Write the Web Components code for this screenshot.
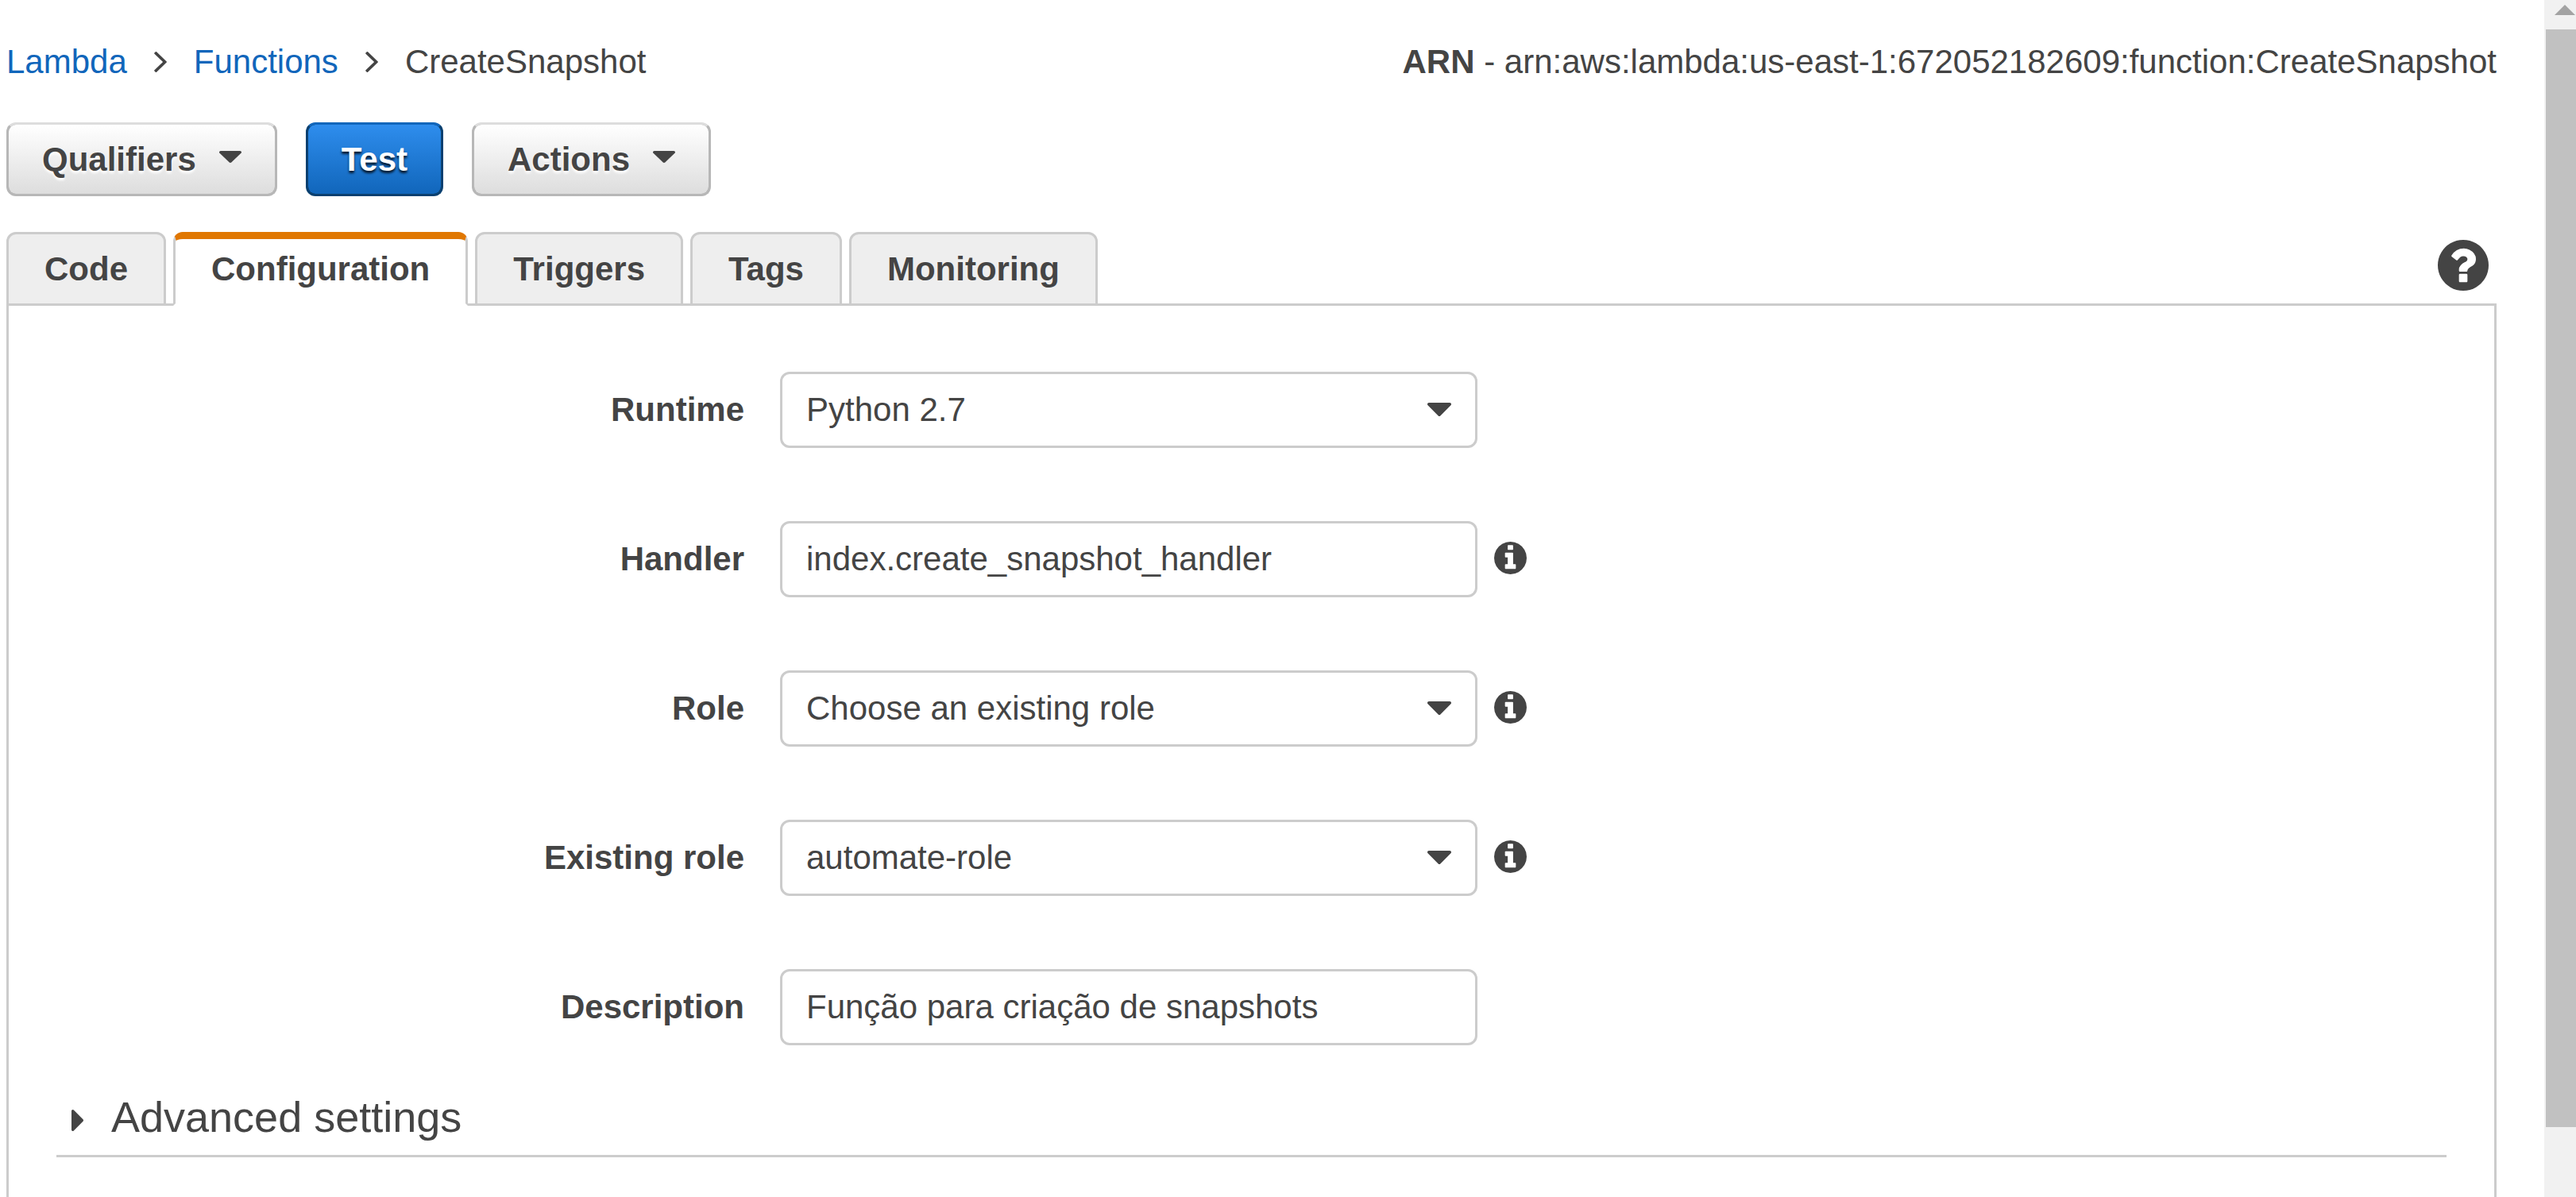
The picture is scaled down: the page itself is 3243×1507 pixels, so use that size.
<!DOCTYPE html>
<html lang="en">
<head>
<meta charset="utf-8">
<title>Lambda - CreateSnapshot</title>
<style>
  html, body { margin: 0; height: 100%; }
  body {
    overflow: hidden;
    background: #fff;
    color: #444;
    font-family: Arial, "Liberation Sans", sans-serif;
    font-size: 42px;
    line-height: 49px;
  }
</style>
</head>
<body>
<lambda-app></lambda-app>

<script>
const CIRCLE = 'm640 416q0 209-103 385.5t-279.5 279.5-385.5 103-385.5-103-279.5-279.5-103-385.5 103-385.5 279.5-279.5 385.5-103 385.5 103 279.5 279.5 103 385.5z';
const ICONS = {
  'caret-down': ['384 640 1024 576', 'M1408 704q0 26-19 45l-448 448q-19 19-45 19t-45-19l-448-448q-19-19-19-45t19-45 45-19h896q26 0 45 19t19 45z'],
  'caret-right': ['640 384 576 1024', 'M1216 896q0 26-19 45l-448 448q-19 19-45 19t-45-19-19-45v-896q0-26 19-45t45-19 45 19l448 448q19 19 19 45z'],
  'angle-right': ['589 411 582 986', 'M1171 904q0 13-10 23l-460 460q-10 10-23 10t-23-10l-50-50q-10-10-10-23t10-23l387-387-387-387q-10-10-10-23t10-23l50-50q10-10 23-10t23 10l460 460q10 10 10 23z'],
  'info': ['128 128 1536 1536', 'M1152 1376v-160q0-14-9-23t-23-9h-96v-512q0-14-9-23t-23-9h-320q-14 0-23 9t-9 23v160q0 14 9 23t23 9h96v320h-96q-14 0-23 9t-9 23v160q0 14 9 23t23 9h448q14 0 23-9t9-23zm-128-896v-160q0-14-9-23t-23-9h-192q-14 0-23 9t-9 23v160q0 14 9 23t23 9h192q14 0 23-9t9-23z' + CIRCLE],
  'question': ['128 128 1536 1536', 'M1024 1376v-192q0-14-9-23t-23-9h-192q-14 0-23 9t-9 23v192q0 14 9 23t23 9h192q14 0 23-9t9-23zm256-672q0-88-55.5-163t-138.5-116-170-41q-243 0-371 213-15 24 8 42l132 100q7 6 19 6 16 0 25-12 53-68 86-92 34-24 86-24 48 0 85.5 26t37.5 59q0 38-20 61t-68 45q-63 28-115.5 86.5t-52.5 125.5v36q0 14 9 23t23 9h192q14 0 23-9t9-23q0-19 21.5-49.5t54.5-49.5q32-18 49-28.5t46-35 44.5-48 28-60.5 12.5-81zm384 192q0 209-103 385.5t-279.5 279.5-385.5 103-385.5-103-279.5-279.5-103-385.5 103-385.5 279.5-279.5 385.5-103 385.5 103 279.5 279.5 103 385.5z'],
  'scroll-up': ['0 0 26 13', 'M13 0L26 13H0z']
};

class BaseElement extends HTMLElement {
  constructor() { super(); this.attachShadow({ mode: 'open' }); }
  connectedCallback() {
    this.shadowRoot.innerHTML = '<style>*{box-sizing:border-box}' + this.styles() + '</style>' + this.markup();
  }
  styles() { return ''; }
  markup() { return '<slot></slot>'; }
}

customElements.define('ui-icon', class extends BaseElement {
  styles() { return ':host{display:block;flex:none}svg{display:block;width:100%;height:100%;fill:currentColor}'; }
  markup() {
    const [box, path] = ICONS[this.getAttribute('name')];
    return `<svg viewBox="${box}" preserveAspectRatio="none" aria-hidden="true"><path d="${path}"/></svg>`;
  }
});

customElements.define('crumb-trail', class extends BaseElement {
  styles() { return `
    :host { display: block; }
    nav { display: flex; align-items: center; gap: 34px; }
    a { color: #1166bb; text-decoration: none; }
    ui-icon { width: 16px; height: 26px; }`; }
  markup() { return `<nav aria-label="Breadcrumb">
    <a href="#lambda">Lambda</a><ui-icon name="angle-right"></ui-icon>
    <a href="#functions">Functions</a><ui-icon name="angle-right"></ui-icon>
    <span aria-current="page">CreateSnapshot</span></nav>`; }
});

customElements.define('action-button', class extends BaseElement {
  styles() { return `
    :host { display: block; }
    button {
      display: flex; align-items: center; gap: 29px; margin: 0;
      padding: 19px 42px; border: 3px solid #b7b7b7; border-top-color: #ddd; border-radius: 12px;
      background: linear-gradient(#fff, #ddd) padding-box, #b7b7b7;
      font: inherit; font-weight: bold; color: #444; text-shadow: 0 3px 3px #fff;
    }
    :host([primary]) button {
      border-color: #0a4070; border-top-color: #1166bb;
      background: linear-gradient(#2e8ded, #1166bb) padding-box, #0a4070;
      color: #fff; text-shadow: 0 3px 3px rgba(0,0,0,.8);
    }
    ui-icon { width: 28px; height: 15px; margin-bottom: 6px; }`; }
  markup() {
    const menu = this.hasAttribute('menu');
    return `<button type="button"${menu ? ' aria-haspopup="true"' : ''}><slot></slot>${menu ? '<ui-icon name="caret-down"></ui-icon>' : ''}</button>`;
  }
});

customElements.define('tab-item', class extends BaseElement {
  styles() { return `
    :host { display: block; }
    button {
      display: block; margin: 0; padding: 19px 45px;
      border: 3px solid #ccc; border-radius: 12px 12px 0 0;
      background: #eee; font: inherit; font-weight: bold; color: #444;
    }
    :host([active]) button {
      padding-top: 13px; background: #fff;
      border-top: 9px solid #e07700; border-bottom-color: #fff;
    }`; }
  markup() { return `<button type="button" role="tab" aria-selected="${this.hasAttribute('active')}"><slot></slot></button>`; }
});

customElements.define('tab-bar', class extends BaseElement {
  styles() { return `
    :host { display: flex; justify-content: space-between; align-items: flex-start; margin-bottom: -3px; position: relative; }
    [role=tablist] { display: flex; gap: 9px; }
    .help { margin: 10px 10px 0 0; padding: 0; border: 0; background: none; color: #444; }
    ui-icon { width: 64px; height: 64px; }`; }
  markup() { return `<div role="tablist"><slot></slot></div>
    <button class="help" type="button" aria-label="Help"><ui-icon name="question"></ui-icon></button>`; }
});

customElements.define('form-field', class extends BaseElement {
  styles() { return `
    :host { display: grid; grid-template-columns: 866fr 2098fr; column-gap: 45px; align-items: center; line-height: 48px; }
    label { text-align: right; font-weight: bold; }
    .value { display: flex; align-items: center; gap: 21px; }
    .control { display: grid; align-items: center; width: 878px; max-width: 100%; }
    input, select {
      grid-area: 1 / 1; appearance: none; width: 100%; height: 96px; margin: 0; padding: 0 30px;
      border: 3px solid #ccc; border-radius: 12px; background: #fff;
      font: inherit; color: inherit; outline: none;
    }
    .control ui-icon { grid-area: 1 / 1; justify-self: end; width: 30px; height: 17px; margin: 0 33px 1px 0; pointer-events: none; }
    button { margin: 0 0 4px; padding: 0; border: 0; background: none; color: inherit; }
    button ui-icon { width: 41px; height: 41px; }`; }
  markup() {
    const label = this.getAttribute('label'), value = this.getAttribute('value');
    const control = this.hasAttribute('options')
      ? `<select id="control"><option>${value}</option></select><ui-icon name="caret-down"></ui-icon>`
      : `<input id="control" type="text" value="${value}">`;
    const info = this.hasAttribute('info')
      ? `<button type="button" aria-label="About ${label}"><ui-icon name="info"></ui-icon></button>` : '';
    return `<label for="control">${label}</label><div class="value"><div class="control">${control}</div>${info}</div>`;
  }
});

customElements.define('expandable-section', class extends BaseElement {
  styles() { return `
    :host { display: block; border-bottom: 3px solid #ccc; padding-bottom: 17px; }
    h2 { margin: 0; font-size: 54px; font-weight: normal; line-height: 62px; }
    button { display: flex; align-items: center; gap: 35px; margin: 0; padding: 0 0 0 19px; border: 0; background: none; font: inherit; color: inherit; }
    ui-icon { width: 15px; height: 27px; margin-top: 8px; }`; }
  markup() { return `<h2><button type="button" aria-expanded="false"><ui-icon name="caret-right"></ui-icon><slot></slot></button></h2>`; }
});

customElements.define('config-panel', class extends BaseElement {
  styles() { return `
    :host { display: block; flex: 1; border: 3px solid #ccc; border-bottom: 0; padding: 83px 60px 0; }
    form { display: flex; flex-direction: column; gap: 92px; margin-bottom: 59px; }`; }
  markup() { return `<form>
      <form-field label="Runtime" value="Python 2.7" options></form-field>
      <form-field label="Handler" value="index.create_snapshot_handler" info></form-field>
      <form-field label="Role" value="Choose an existing role" options info></form-field>
      <form-field label="Existing role" value="automate-role" options info></form-field>
      <form-field label="Description" value="Função para criação de snapshots"></form-field>
    </form>
    <expandable-section>Advanced settings</expandable-section>`; }
});

customElements.define('scroll-track', class extends BaseElement {
  styles() { return `
    :host { display: flex; flex-direction: column; flex: none; width: 40px; background: #f1f1f1; }
    .up { display: flex; justify-content: flex-end; height: 37px; padding: 6px 1px 0 0; color: #a3a3a3; }
    .up ui-icon { width: 26px; height: 13px; }
    .rail { flex: 1; padding-left: 2px; }
    .thumb { height: 94%; background: #c1c1c1; }`; }
  markup() { return `<div class="up"><ui-icon name="scroll-up"></ui-icon></div><div class="rail"><div class="thumb"></div></div>`; }
});

customElements.define('lambda-app', class extends BaseElement {
  styles() { return `
    :host { display: flex; height: 100vh; }
    main { flex: 1; min-width: 0; display: flex; flex-direction: column; overflow: hidden; padding: 53px 60px 0 8px; }
    header { display: flex; justify-content: space-between; margin-bottom: 52px; }
    .actions { display: flex; gap: 36px; margin-bottom: 45px; }`; }
  markup() { return `<main>
      <header><crumb-trail></crumb-trail><div><b>ARN</b> - arn:aws:lambda:us-east-1:672052182609:function:CreateSnapshot</div></header>
      <div class="actions">
        <action-button menu>Qualifiers</action-button>
        <action-button primary>Test</action-button>
        <action-button menu>Actions</action-button>
      </div>
      <tab-bar>
        <tab-item>Code</tab-item><tab-item active>Configuration</tab-item><tab-item>Triggers</tab-item><tab-item>Tags</tab-item><tab-item>Monitoring</tab-item>
      </tab-bar>
      <config-panel></config-panel>
    </main>
    <scroll-track></scroll-track>`; }
});
</script>
</body>
</html>
